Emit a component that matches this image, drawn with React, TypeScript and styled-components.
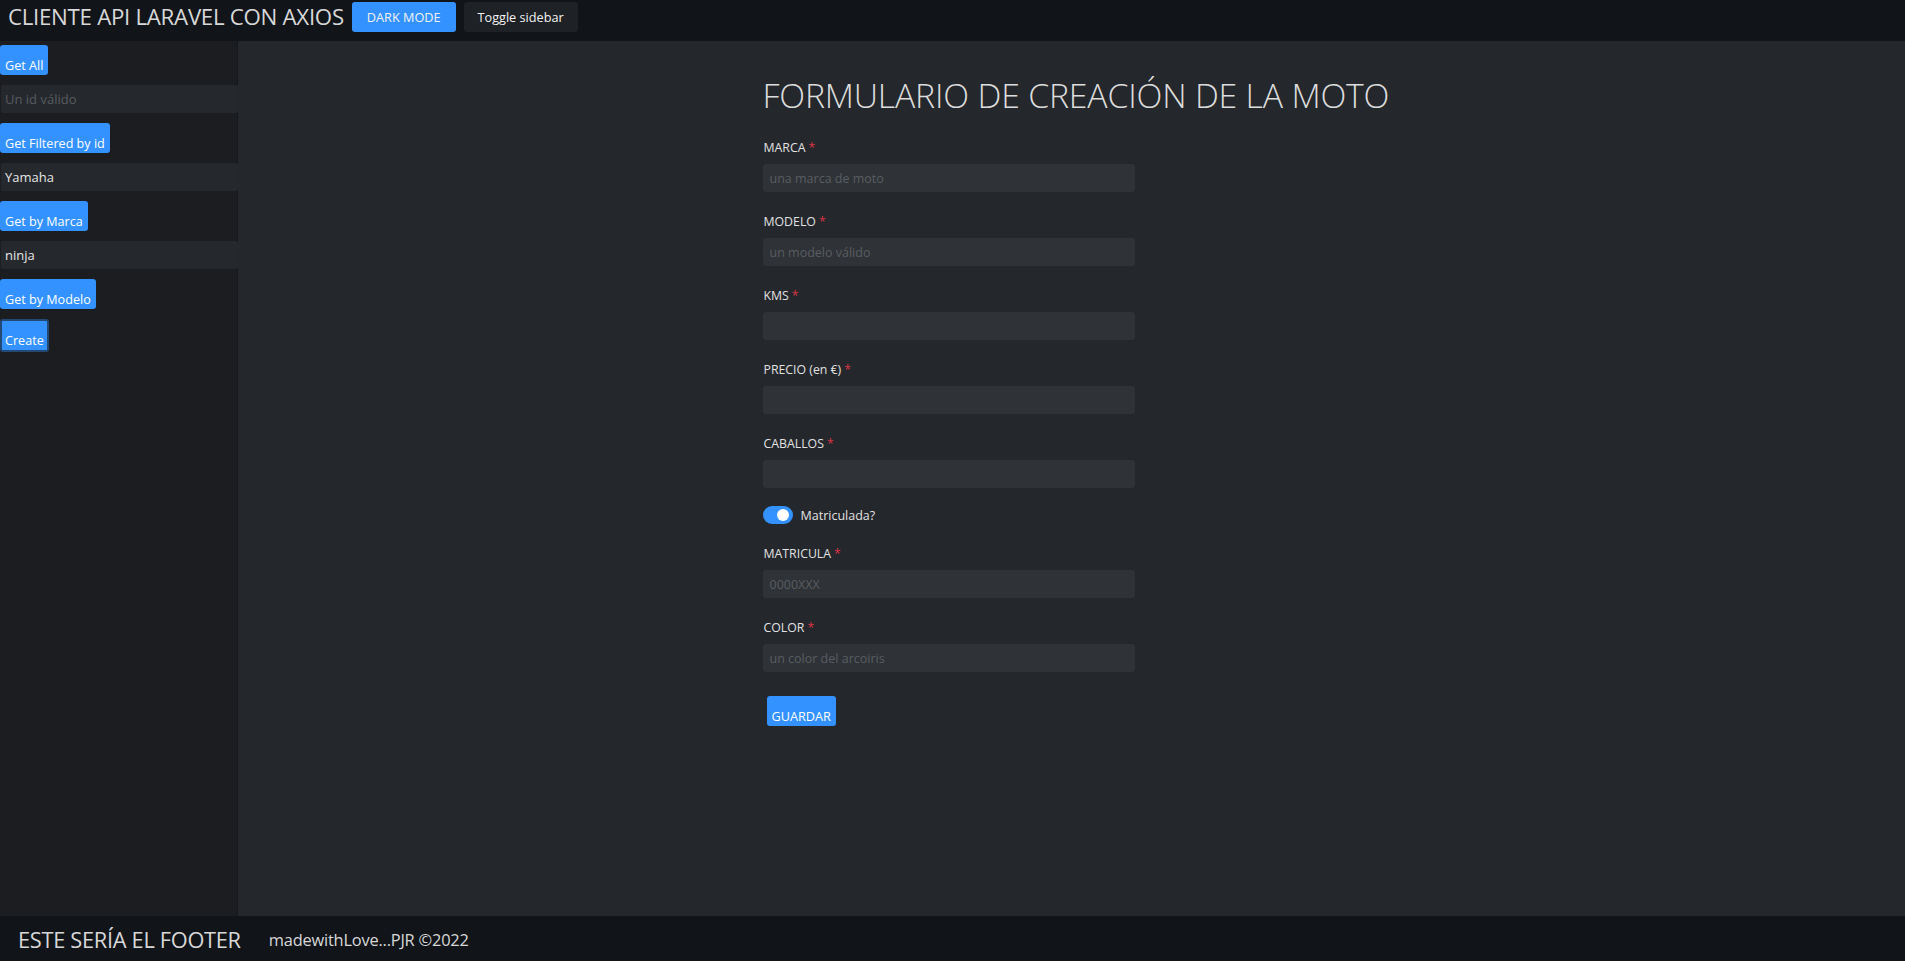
import React from "react";
import styled, { createGlobalStyle } from "styled-components";

const GlobalStyle = createGlobalStyle`
  html, body { margin: 0; padding: 0; background: #ffffff; }
  body { font-family: "Open Sans", "Noto Sans", sans-serif; }
  * { box-sizing: border-box; }
`;

const Page = styled.div`
  display: flex;
  flex-direction: column;
  width: 1905px;
  height: 961px;
`;

const Header = styled.header`
  height: 41px;
  background: #111418;
  display: flex;
  align-items: flex-start;
  padding: 2px 0 0 8px;
  gap: 8px;
`;

const Brand = styled.h1`
  margin: 0;
  font-size: 22.3px;
  font-weight: 400;
  color: #d8d8d8;
  line-height: 30px;
  letter-spacing: -0.3px;
`;

const TopButton = styled.button<{ $primary?: boolean }>`
  height: 30px;
  border: none;
  border-radius: 3px;
  padding: 0 ${(p) => (p.$primary ? "15px" : "14px")};
  font-family: inherit;
  font-size: 12.7px;
  color: #f2f2f2;
  background: ${(p) => (p.$primary ? "#3392ff" : "#1e2125")};
`;

const Body = styled.div`
  flex: 1;
  display: flex;
  min-height: 0;
`;

const Sidebar = styled.aside`
  width: 238px;
  background: #1b1d21;
  display: flex;
  flex-direction: column;
  align-items: flex-start;
  padding-top: 4px;
  gap: 10px;
  border-right: 1px solid #16181b;
`;

const SideButton = styled.button<{ $ring?: boolean }>`
  height: ${(p) => (p.$ring ? "33px" : "30px")};
  border: ${(p) => (p.$ring ? "2px solid #234a75" : "none")};
  border-radius: 3px;
  background: #3392ff;
  color: #ffffff;
  font-family: inherit;
  font-size: 12.6px;
  line-height: 19px;
  padding: ${(p) => (p.$ring ? "10px 3px 0" : "11px 5px 0")};
  text-align: left;
  white-space: nowrap;
`;

const SideInput = styled.input`
  width: 237px;
  height: 28px;
  margin-left: 1px;
  border: none;
  border-radius: 2px;
  background: #25282c;
  color: #e6e6e6;
  font-family: inherit;
  font-size: 13px;
  padding: 0 4px;
  outline: none;
  &::placeholder { color: #575b61; }
`;

const Main = styled.main`
  flex: 1;
  background: #24272b;
  display: flex;
  justify-content: center;
  padding-top: 34px;
`;

const FormWrap = styled.form`
  width: 616px;
  display: flex;
  flex-direction: column;
  align-items: flex-start;
`;

const Title = styled.h2`
  margin: 0 0 22px -1px;
  font-size: 33.8px;
  font-weight: 300;
  color: #dddddd;
  line-height: 41px;
  white-space: nowrap;
  letter-spacing: -0.2px;
`;

const Field = styled.div`
  display: flex;
  flex-direction: column;
  margin-bottom: 20px;
`;

const Label = styled.label`
  font-size: 12.3px;
  line-height: 19px;
  color: #e2e2e2;
  margin-bottom: 7px;
`;

const Req = styled.span`
  color: #dc3545;
  margin-left: 3px;
`;

const FormInput = styled.input`
  width: 372px;
  height: 28px;
  margin-left: -1px;
  border: none;
  border-radius: 3px;
  background: #2f3236;
  color: #e6e6e6;
  font-family: inherit;
  font-size: 12.5px;
  padding: 0 7px;
  outline: none;
  &::placeholder { color: #595d63; }
`;

const SwitchRow = styled.div`
  display: flex;
  align-items: center;
  gap: 8px;
  height: 20px;
  margin: -3px 0 19px -1px;
`;

const Switch = styled.span`
  position: relative;
  width: 30px;
  height: 18px;
  border-radius: 9px;
  background: #3392ff;
  &::after {
    content: "";
    position: absolute;
    right: 4px;
    top: 3px;
    width: 12px;
    height: 12px;
    border-radius: 50%;
    background: #ffffff;
  }
`;

const SwitchLabel = styled.span`
  font-size: 12.5px;
  color: #e2e2e2;
`;

const SaveButton = styled.button`
  margin: 4px 0 0 3px;
  height: 30px;
  border: none;
  border-radius: 3px;
  background: #3392ff;
  color: #ffffff;
  font-family: inherit;
  font-size: 12.7px;
  line-height: 19px;
  padding: 11px 5px 0;
`;

const Footer = styled.footer`
  height: 45px;
  background: #111418;
  display: flex;
  align-items: center;
  padding: 2px 0 0 18px;
  gap: 28px;
`;

const FooterTitle = styled.span`
  font-size: 21.8px;
  color: #d8d8d8;
  letter-spacing: -0.3px;
`;

const FooterNote = styled.span`
  font-size: 16.4px;
  color: #d8d8d8;
  letter-spacing: -0.2px;
`;

const fields = [
  { label: "MARCA", placeholder: "una marca de moto" },
  { label: "MODELO", placeholder: "un modelo válido" },
  { label: "KMS", placeholder: "" },
  { label: "PRECIO (en €)", placeholder: "" },
  { label: "CABALLOS", placeholder: "" },
];

export default function App() {
  return (
    <>
      <GlobalStyle />
      <Page>
        <Header>
          <Brand>CLIENTE API LARAVEL CON AXIOS</Brand>
          <TopButton $primary>DARK MODE</TopButton>
          <TopButton>Toggle sidebar</TopButton>
        </Header>
        <Body>
          <Sidebar>
            <SideButton>Get All</SideButton>
            <SideInput placeholder="Un id válido" />
            <SideButton>Get Filtered by id</SideButton>
            <SideInput defaultValue="Yamaha" />
            <SideButton>Get by Marca</SideButton>
            <SideInput defaultValue="ninja" />
            <SideButton>Get by Modelo</SideButton>
            <SideButton $ring>Create</SideButton>
          </Sidebar>
          <Main>
            <FormWrap onSubmit={(e) => e.preventDefault()}>
              <Title>FORMULARIO DE CREACIÓN DE LA MOTO</Title>
              {fields.map((f) => (
                <Field key={f.label}>
                  <Label>
                    {f.label}
                    <Req>*</Req>
                  </Label>
                  <FormInput placeholder={f.placeholder} />
                </Field>
              ))}
              <SwitchRow>
                <Switch />
                <SwitchLabel>Matriculada?</SwitchLabel>
              </SwitchRow>
              <Field>
                <Label>
                  MATRICULA
                  <Req>*</Req>
                </Label>
                <FormInput placeholder="0000XXX" />
              </Field>
              <Field>
                <Label>
                  COLOR
                  <Req>*</Req>
                </Label>
                <FormInput placeholder="un color del arcoiris" />
              </Field>
              <SaveButton>GUARDAR</SaveButton>
            </FormWrap>
          </Main>
        </Body>
        <Footer>
          <FooterTitle>ESTE SERÍA EL FOOTER</FooterTitle>
          <FooterNote>madewithLove...PJR ©2022</FooterNote>
        </Footer>
      </Page>
    </>
  );
}
